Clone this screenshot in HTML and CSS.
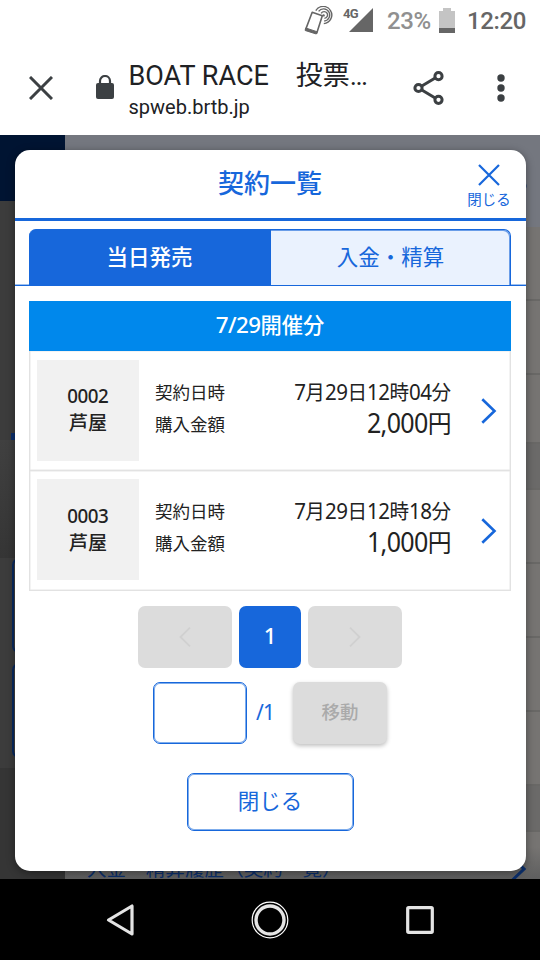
FILE: index.html
```
<!DOCTYPE html>
<html lang="ja">
<head>
<meta charset="utf-8">
<title>契約一覧</title>
<link rel="stylesheet" href="styles.css">
</head>
<body>
<div class="screen">
  <header class="status">
    <svg class="cast" width="30" height="30" viewBox="0 0 30 30" fill="none" stroke="#666">
      <path d="M8.2 6.3 L18.3 9.8 L12.8 27 L1.6 23.6 Z" stroke-width="1.6" stroke-linejoin="round"/>
      <path d="M1.8 22 L13 25.7 L12.3 28 L1.2 24.5 Z" fill="#666" stroke-width="1"/>
      <path d="M17.2 7.3 A3.4 3.4 0 1 1 20.4 12.4 M14.6 5.4 A6.1 6.1 0 1 1 20.2 15 M11.8 4.6 A8.6 8.6 0 1 1 19.8 17.6" stroke-width="1.4"/>
      <circle cx="19.6" cy="9.4" r="1.2" fill="#666" stroke="none"/>
    </svg>
    <span class="net">4G</span>
    <svg class="signal" width="24" height="24" viewBox="0 0 24 24"><path d="M24 0V24H0Z" fill="#666"/></svg>
    <span class="percent">23%</span>
    <svg class="battery" width="16" height="25" viewBox="0 0 16 25"><path d="M4 0H12V3H16V20H0V3H4Z" fill="#c4c4c4"/><path d="M0 20H16V25H0Z" fill="#666"/></svg>
    <span class="clock">12:20</span>
  </header>
  <div class="toolbar">
    <svg class="tb-close" width="24" height="24" viewBox="0 0 24 24"><path d="M1 1L23 23M23 1L1 23" stroke="#3c4043" stroke-width="3"/></svg>
    <svg class="lock" width="18" height="24" viewBox="0 0 18 24"><path d="M4 9V6a5 5 0 0 1 10 0v3" fill="none" stroke="#3c4043" stroke-width="2.2"/><rect y="8" width="18" height="16" rx="2" fill="#3c4043"/></svg>
    <div class="address">
      <div class="page-title">BOAT RACE<span class="page-title-ja">投票</span>…</div>
      <div class="host">spweb.brtb.jp</div>
    </div>
    <svg class="share" width="32" height="36" viewBox="0 0 32 36" fill="none" stroke="#3c4043" stroke-width="3"><path d="M23 7.5L8 16.5M8 19.5L23 28.5"/><circle cx="5.5" cy="18" r="3.6"/><circle cx="25.5" cy="6.2" r="3.6"/><circle cx="25.5" cy="29.8" r="3.6"/></svg>
    <svg class="more" width="8" height="30" viewBox="0 0 8 30" fill="#3c4043"><circle cx="4" cy="5" r="3.7"/><circle cx="4" cy="15" r="3.7"/><circle cx="4" cy="25" r="3.7"/></svg>
  </div>

  <main class="viewport">
    <div class="page">
      <aside class="side">
        <div class="side-logo"></div>
        <div class="side-tab"></div>
        <div class="side-gap"></div>
        <div class="side-box"></div>
        <div class="side-box"></div>
        <div class="side-end"></div>
      </aside>
      <section class="content">
        <div class="content-head"><svg width="12" height="12" viewBox="0 0 12 12"><circle cx="6" cy="6" r="5.5" fill="#0b2f6c"/></svg></div>
        <div class="line"></div>
        <div class="line"></div>
        <div class="line short"></div>
        <div class="line band"></div>
        <div class="line"></div>
        <div class="line"></div>
        <div class="line"></div>
        <div class="line"></div>
        <div class="line band"></div>
        <div class="history"><span>入金・精算履歴（契約一覧）</span>
          <svg width="15" height="24" viewBox="0 0 15 24"><path d="M1.5 1L13 12L1.5 23" fill="none" stroke="#0b2f6c" stroke-width="3"/></svg>
        </div>
      </section>
    </div>

    <div class="dialog">
      <div class="dialog-head">
        <h1>契約一覧</h1>
        <div class="dialog-close">
          <svg width="22" height="22" viewBox="0 0 22 22"><path d="M1 1L21 21M21 1L1 21" stroke="#1767db" stroke-width="2.2"/></svg>
          <span>閉じる</span>
        </div>
      </div>
      <nav class="tabs">
        <div class="tab active">当日発売</div>
        <div class="tab">入金・精算</div>
      </nav>
      <div class="list">
        <div class="list-head"><b>7/29</b>開催分</div>
        <div class="row">
          <div class="venue"><span class="number"><b>0002</b></span><span>芦屋</span></div>
          <div class="labels"><span>契約日時</span><span>購入金額</span></div>
          <div class="values"><span><b>7</b>月<b>29</b>日<b>12</b>時<b>04</b>分</span><span class="amount"><b>2,000</b>円</span></div>
          <svg class="chev" width="16" height="26" viewBox="0 0 16 26"><path d="M1.3 1.2L13.5 13L1.3 24.8" fill="none" stroke="#1767db" stroke-width="2.6"/></svg>
        </div>
        <div class="row">
          <div class="venue"><span class="number"><b>0003</b></span><span>芦屋</span></div>
          <div class="labels"><span>契約日時</span><span>購入金額</span></div>
          <div class="values"><span><b>7</b>月<b>29</b>日<b>12</b>時<b>18</b>分</span><span class="amount"><b>1,000</b>円</span></div>
          <svg class="chev" width="16" height="26" viewBox="0 0 16 26"><path d="M1.3 1.2L13.5 13L1.3 24.8" fill="none" stroke="#1767db" stroke-width="2.6"/></svg>
        </div>
      </div>
      <div class="pager">
        <div class="page-btn"><svg width="12" height="20" viewBox="0 0 12 20"><path d="M11 .7L1.5 10L11 19.3" fill="none" stroke="#d0d0d0" stroke-width="1.8"/></svg></div>
        <div class="page-btn current">1</div>
        <div class="page-btn"><svg width="12" height="20" viewBox="0 0 12 20"><path d="M1 .7L10.5 10L1 19.3" fill="none" stroke="#d0d0d0" stroke-width="1.8"/></svg></div>
      </div>
      <div class="jump">
        <div class="jump-input"></div>
        <span class="jump-total">/1</span>
        <div class="jump-btn">移動</div>
      </div>
      <div class="close-btn">閉じる</div>
    </div>
  </main>

  <footer class="navbar">
    <svg width="30" height="36" viewBox="0 0 30 36"><path d="M27 4V32L3.5 18Z" fill="none" stroke="#e4e4e4" stroke-width="3.2" stroke-linejoin="round"/></svg>
    <svg width="40" height="40" viewBox="0 0 40 40" fill="none"><circle cx="20" cy="20" r="17.8" stroke="#fff" stroke-width="1.2"/><circle cx="20" cy="20" r="14" stroke="#e4e4e4" stroke-width="3.4"/></svg>
    <svg width="30" height="30" viewBox="0 0 30 30"><rect x="2.7" y="2.7" width="24.6" height="24.6" rx="1" fill="none" stroke="#e4e4e4" stroke-width="3.2"/></svg>
  </footer>
</div>
</body>
</html>
```
FILE: styles.css
```
* { box-sizing: border-box; }
body { margin: 0; font-family: "Noto Sans CJK JP", sans-serif; color: #222; }
svg { display: block; flex: none; }
b { font-family: "Noto Sans", sans-serif; font-weight: inherit; font-size: 1.05em; letter-spacing: -.025em; line-height: 1; }
.screen { width: 540px; height: 960px; overflow: hidden; display: flex; flex-direction: column; background: #fff; }

.status { height: 43px; display: flex; align-items: flex-start; padding-left: 304px; font-family: Roboto, sans-serif; font-weight: 500; color: #666; }
.cast { margin-top: 6px; }
.net { margin: 7px 0 0 9px; width: 15px; font-size: 13px; line-height: 14px; font-weight: 700; letter-spacing: -.8px; }
.signal { margin: 8px 0 0 -9px; }
.percent { margin: 7px 0 0 14px; width: 44px; font-size: 24px; line-height: 28px; color: #909090; letter-spacing: -.4px; }
.battery { margin: 8px 0 0 8px; }
.clock { margin: 7px 0 0 12px; font-size: 24px; line-height: 28px; letter-spacing: -.4px; }

.toolbar { height: 92px; display: flex; align-items: flex-start; padding-left: 29px; font-family: Roboto, "Noto Sans CJK JP", sans-serif; color: #202124; }
.tb-close { margin-top: 33px; }
.lock { margin: 32px 0 0 43px; }
.address { margin: 16px 0 0 14.5px; width: 249.5px; white-space: nowrap; }
.page-title { font-size: 27px; line-height: 34px; height: 34px; }
.page-title-ja { margin-left: 27px; }
.host { font-size: 20px; line-height: 26px; margin-top: 1px; }
.share { margin: 27px 0 0 35px; }
.more { margin: 30px 0 0 52px; }

.viewport { height: 744px; position: relative; }
.page { display: flex; height: 744px; overflow: hidden; }
.side { width: 65px; background: #3c3c3c; display: flex; flex-direction: column; }
.side-logo { height: 66px; background: #001432; flex: none; }
.side-tab { height: 239px; flex: none; background: linear-gradient(#0b2f6c, #0b2f6c) 11px 100% / 54px 7px no-repeat; box-shadow: 0 2px 3px rgba(0,0,0,.3); }
.side-gap { height: 118px; flex: none; background: linear-gradient(#404040, #353535); }
.side-box { height: 95px; margin: 0 0 10px 12px; border: 2px solid #092a60; border-radius: 7px; background: #414141; flex: none; }
.side-end { flex: 1; background: #353535; }
.content { flex: 1; background: #767472; display: flex; flex-direction: column; }
.content-head { height: 92px; background: #74777f; flex: none; display: flex; justify-content: flex-end; padding: 45px 13px 0 0; }
.line { height: 74px; border-bottom: 2px solid #696866; flex: none; }
.line.short { height: 69px; }
.line.band { height: 46px; background: #6b6a69; }
.history { flex: 1; background: linear-gradient(#767472 30%, #606060 90%); display: flex; justify-content: space-between; padding: 22px 14px 0 22px; font-size: 19.6px; line-height: 28px; color: #0b2f6c; }
.history svg { margin-top: 3px; }
.history span { white-space: nowrap; }

.dialog { position: absolute; left: 14.5px; top: 15px; width: 511px; height: 721px; border-radius: 15px; background: #fff; box-shadow: 0 2px 9px rgba(0,0,0,.4); overflow: hidden; display: flex; flex-direction: column; color: #222; }
.dialog-head { height: 71px; border-bottom: 3px solid #1767db; display: grid; grid-template-columns: 73px 1fr 73px; color: #1767db; flex: none; }
.dialog-head h1 { grid-column: 2; margin: 14px 0 0; text-align: center; font-size: 26px; line-height: 36px; font-weight: 500; }
.dialog-close { display: flex; flex-direction: column; align-items: center; padding-top: 14px; }
.dialog-close span { font-size: 14.5px; line-height: 20px; margin-top: 3px; }
.tabs { height: 66px; margin-top: -1px; padding: 9px 14.5px 0; border-bottom: 1px solid #1767db; box-shadow: inset 0 -1px #9dc0f0; display: grid; grid-template-columns: 242px 240px; flex: none; }
.tab { border: 1px solid #1767db; border-left: 0; border-bottom: 0; border-radius: 0 7px 0 0; box-shadow: inset -1px 1px #6a9de8; background: #eaf2fe; color: #1767db; text-align: center; font-size: 21.5px; line-height: 52px; font-weight: 400; }
.tab.active { background: #1767db; color: #fff; border-radius: 7px 0 0; box-shadow: none; font-weight: 500; }
.list { margin: 15px 14.5px 0; flex: none; }
.list-head { height: 50px; background: #0088ec; color: #fff; text-align: center; font-size: 21.3px; line-height: 46px; font-weight: 500; }
.row { height: 120px; border: 1px solid #e2e2e2; border-top: 0; box-shadow: inset 0 0 0 .5px #e8e8e8; display: flex; padding: 8.5px 13px 0 7px; }
.row + .row { padding-top: 8px; }
.venue { width: 102px; height: 101px; background: #f1f1f1; display: flex; flex-direction: column; align-items: center; padding-top: 21.5px; font-size: 19px; line-height: 27px; font-weight: 500; }
.number { transform: scaleX(.94); }
.labels { width: 74px; margin: 16px 0 0 16px; display: flex; flex-direction: column; font-size: 17.5px; line-height: 32px; white-space: nowrap; }
.values { flex: 1; margin-top: 15px; display: flex; flex-direction: column; align-items: flex-end; font-size: 20.7px; line-height: 32px; white-space: nowrap; }
.values span { transform: scaleX(.945); transform-origin: 100% 50%; }
.values .amount { font-size: 25.2px; line-height: 31px; }
.chev { margin: 38.5px 0 0 30px; }
.pager { margin-top: 15px; display: flex; justify-content: center; gap: 7px; }
.page-btn { width: 94px; height: 62px; border-radius: 7px; background: #dcdcdc; display: flex; align-items: center; justify-content: center; }
.page-btn.current { width: 62px; background: #1767db; color: #fff; font-family: "Noto Sans", sans-serif; font-size: 22px; line-height: 58px; font-weight: 500; padding-bottom: 4px; }
.jump { margin-top: 14px; display: flex; justify-content: center; }
.jump-input { width: 94px; height: 62px; border: 1px solid #1767db; box-shadow: inset 0 0 0 1px #7fadec; border-radius: 7px; }
.jump-total { width: 46px; padding-left: 9px; font-family: "Noto Sans", sans-serif; font-size: 21px; letter-spacing: -.8px; line-height: 60px; color: #1767db; }
.jump-btn { width: 94px; height: 62px; border-radius: 7px; background: #dcdcdc; color: #aaa; text-align: center; font-size: 18.5px; line-height: 59px; font-weight: 500; box-shadow: 0 2px 4px rgba(0,0,0,.25); }
.close-btn { width: 167px; height: 58px; margin: 28.5px auto 0; border: 1px solid #1767db; box-shadow: inset 0 0 0 1px #7fadec; border-radius: 7px; color: #1767db; text-align: center; font-size: 21.5px; line-height: 52px; }

.navbar { height: 81px; background: #000; display: flex; align-items: center; justify-content: space-between; padding: 0 105px; }
```
